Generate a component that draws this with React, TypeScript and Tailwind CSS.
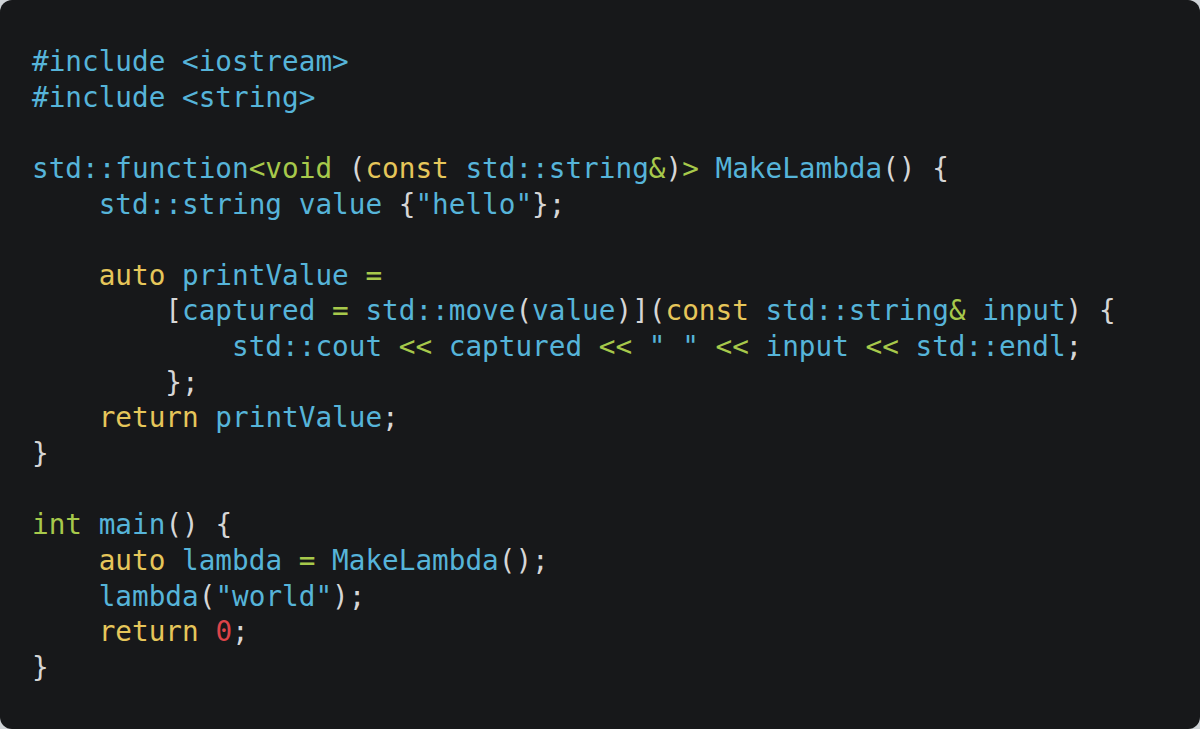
const B = 'text-[#56b4d9]';
const Y = 'text-[#e6c65a]';
const G = 'text-[#a7c94b]';
const W = 'text-[#d6d6d6]';
const R = 'text-[#dc4449]';

type Tok = [string, string];

const lines: Tok[][] = [
  [[B, '#include <iostream>']],
  [[B, '#include <string>']],
  [],
  [
    [B, 'std::function'],
    [G, '<void'],
    [W, ' ('],
    [Y, 'const'],
    [B, ' std::string'],
    [G, '&'],
    [W, ')'],
    [G, '>'],
    [B, ' MakeLambda'],
    [W, '() {'],
  ],
  [
    [B, '    std::string value '],
    [W, '{'],
    [B, '"hello"'],
    [W, '};'],
  ],
  [],
  [
    [Y, '    auto'],
    [B, ' printValue '],
    [G, '='],
  ],
  [
    [W, '        ['],
    [B, 'captured '],
    [G, '='],
    [B, ' std::move'],
    [W, '('],
    [B, 'value'],
    [W, ')]('],
    [Y, 'const'],
    [B, ' std::string'],
    [G, '&'],
    [B, ' input'],
    [W, ') {'],
  ],
  [
    [B, '            std::cout '],
    [G, '<<'],
    [B, ' captured '],
    [G, '<<'],
    [B, ' " " '],
    [G, '<<'],
    [B, ' input '],
    [G, '<<'],
    [B, ' std::endl'],
    [W, ';'],
  ],
  [[W, '        };']],
  [
    [Y, '    return'],
    [B, ' printValue'],
    [W, ';'],
  ],
  [[W, '}']],
  [],
  [
    [G, 'int'],
    [B, ' main'],
    [W, '() {'],
  ],
  [
    [Y, '    auto'],
    [B, ' lambda '],
    [G, '='],
    [B, ' MakeLambda'],
    [W, '();'],
  ],
  [
    [B, '    lambda'],
    [W, '('],
    [B, '"world"'],
    [W, ');'],
  ],
  [
    [Y, '    return '],
    [R, '0'],
    [W, ';'],
  ],
  [[W, '}']],
];

const App = () => {
  return (
    <div className="w-[1200px] h-[729px] bg-[#cfd3d7]">
      <div className="w-full h-full rounded-[12px] bg-[#17181a] pt-[44px] pl-[32px]">
        <pre className="font-['DejaVu_Sans_Mono',monospace] text-[27.7px] leading-[35.65px]">
          {lines.map((line, i) => (
            <div key={i} className="h-[35.65px]">
              {line.map(([c, t], j) => (
                <span key={j} className={c}>
                  {t}
                </span>
              ))}
            </div>
          ))}
        </pre>
      </div>
    </div>
  );
};

export default App;
